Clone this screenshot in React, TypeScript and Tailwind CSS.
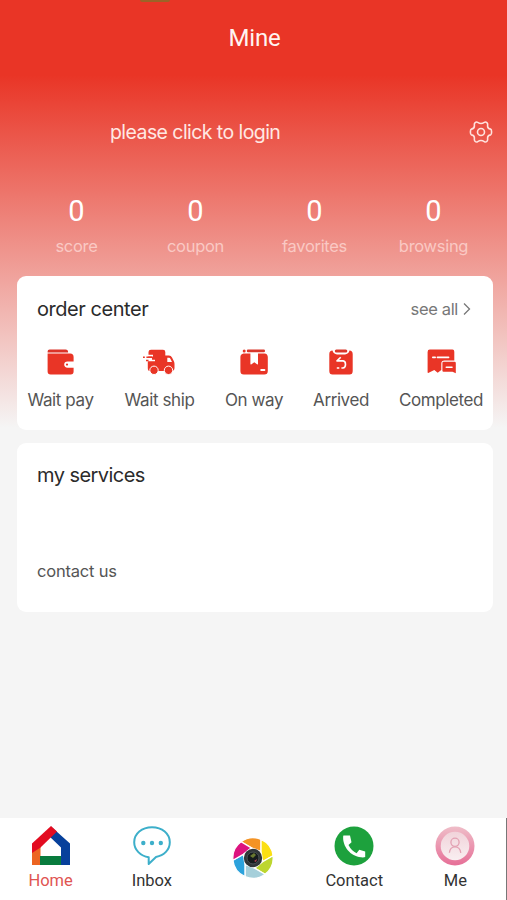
import type { ReactNode } from 'react';

const WalletIcon = () => (
  <svg width="28" height="26" viewBox="0 0 28 26" fill="#e93526">
    <path d="M.6 2.5Q.6.6 2.6.6H18.6Q21.1.6 21.1 3.4H.6Z" fill="#db3328" />
    <path d="M.6 4.4H23.2Q26.6 4.4 26.6 8V12.5H20.6Q17.2 12.7 17.2 15.6T20.6 18.8H26.6V22.5Q26.6 25.5 23.7 25.5H3.6Q.6 25.5.6 22.5Z" />
    <circle cx="20" cy="15.6" r="1.1" />
  </svg>
);

const TruckIcon = () => (
  <svg className="mr-[2px]" width="32" height="26" viewBox="0 0 32 26" fill="#e93526">
    <path d="M5.5 4.5V3Q5.5.8 8 .8H20Q22.3.8 22.3 3V6.5H26Q28 6.5 29 8.6L31 12.5Q31.5 13.5 31.5 15V19Q31.5 22 28.5 22H6.5Q4.8 22 4.8 19V12.2H12V10.7H9V9H5.2V7.4H10V5.8H5.5Z" />
    <path d="M24.3 8.8H26Q27 8.8 27.5 9.9L29 13H24.3Z" fill="white" />
    <path d="M0 8.2H1.8M3.4 8.2H9M3 11.5H5.5" stroke="#e93526" strokeWidth="1.5" />
    <circle cx="11" cy="21.3" r="4.2" stroke="white" strokeWidth="1" />
    <circle cx="25.5" cy="21.3" r="4.2" stroke="white" strokeWidth="1" />
  </svg>
);

const ParcelIcon = () => (
  <svg width="28" height="26" viewBox="0 0 28 26" fill="#e93526">
    <circle cx="4.2" cy="2" r="1.5" />
    <rect x="6.8" y=".6" width="18.2" height="2.7" rx="1.2" fill="#d9362b" />
    <path d="M3.5 4.4H10.4V14.8Q10.4 16 11.5 15.3L14.3 13.3L17 15.3Q18 16 18 14.8V4.4H24.5Q27.7 4.8 27.8 8V22Q27.8 25.5 24.3 25.5H3.8Q.4 25.5.4 22V8Q.4 5 3.5 4.4Z" />
    <rect x="20.3" y="20" width="5" height="2" rx=".8" fill="white" />
  </svg>
);

const ClipboardIcon = () => (
  <svg width="24" height="26" viewBox="0 0 24 26" fill="#e93526">
    <path d="M3.5 1.5Q4.5 5.3 8 5.4H16Q19.5 5.3 20.5 1.5Q23.6 1.8 23.7 5V22Q23.7 25.5 20.5 25.5H3.5Q.3 25.5.3 22V5Q.3 1.8 3.5 1.5Z" />
    <rect x="5.8" y=".5" width="12.5" height="3" rx="1.5" fill="#d9362b" />
    <path d="M11.7 8.2L8 11.9H14.2Q16.5 12.2 16.5 15.4T13.8 19H12.4M7.8 19H10.3" fill="none" stroke="white" strokeWidth="1.6" strokeLinejoin="round" />
  </svg>
);

const ReceiptIcon = () => (
  <svg width="29" height="26" viewBox="0 0 29 26" fill="#e93526">
    <path d="M2.8.6H25.5Q27.3.6 27.3 2.7V11.4H17.4Q14.3 11.5 14.3 14.5V21L10.7 23.7L7.3 21L1.2 23.9Q.6 24 .6 23V3Q.6.6 2.8.6Z" />
    <path d="M16.5 12.8H27.5Q28.8 12.8 28.8 14V24.2L25.5 22.7H16.5Q15.4 22.7 15.4 21.5V14Q15.4 12.8 16.5 12.8Z" />
    <path d="M5.8 8.4H8.2M10.4 8.4H21.6M19.3 18.3H25" stroke="white" strokeWidth="1.6" strokeLinecap="round" />
  </svg>
);

const GearIcon = () => (
  <svg width="24" height="24" viewBox="0 0 24 24" fill="none" stroke="#ffe3de" strokeWidth="1.6" strokeLinejoin="round">
    <path d="M6 2.8Q7.3 1.5 8.7 2.4Q12 4.5 15.3 2.4Q16.7 1.5 18 2.8Q19 4 18.6 5.5Q18.3 8.6 21.6 9.1Q22.6 9.5 22.6 12T21.6 14.9Q18.3 15.4 18.6 18.5Q19 20 18 21.2Q16.7 22.5 15.3 21.6Q12 19.5 8.7 21.6Q7.3 22.5 6 21.2Q5 20 5.4 18.5Q5.7 15.4 2.4 14.9Q1.4 14.5 1.4 12T2.4 9.1Q5.7 8.6 5.4 5.5Q5 4 6 2.8Z" />
    <circle cx="12" cy="12" r="3.5" />
  </svg>
);

const HouseIcon = () => (
  <svg width="38" height="39" viewBox="0 0 38 39">
    <path d="M0 24L8.5 18V39H0Z" fill="#ec6421" />
    <path d="M8 30H30V39H8Z" fill="#087b3d" />
    <path d="M19 .5L38 17.5V39H29V21.5L17 10Z" fill="#07409b" />
    <path d="M19 0L25 5.5L8.5 21.5L0 27V17.5Z" fill="#e30b20" />
  </svg>
);

const ChatIcon = () => (
  <svg width="38" height="40" viewBox="0 0 38 40" fill="none" stroke="#3dafca" strokeWidth="2">
    <path d="M19 1.2C29.2 1.2 36.8 7.7 36.8 16.2C36.8 23.8 31 29.6 23 31L15.7 38V31.2C7.4 30 1.2 23.8 1.2 16.2C1.2 7.7 8.8 1.2 19 1.2Z" strokeLinejoin="round" />
    <g fill="#3dafca" stroke="none">
      <circle cx="10.3" cy="17" r="2.2" />
      <circle cx="19" cy="17" r="2.2" />
      <circle cx="27.8" cy="17" r="2.2" />
    </g>
  </svg>
);

const blades = ['#f39325', '#fbdf13', '#bdd630', '#a5cfda', '#2ca2dc', '#dc137f'];

const ShutterIcon = () => (
  <svg width="42" height="42" viewBox="-21 -21 42 42">
    {blades.map((color, i) => (
      <path key={color} d="M-12 -16.2A20.2 20.2 0 0 1 8.1 -18.5L8 -6.5L-1.6 -10.2Z" fill={color} stroke="white" strokeWidth="1.3" transform={`rotate(${i * 60})`} />
    ))}
    <circle r="9.2" fill="#303638" />
    <circle r="6" fill="#151b1d" stroke="#4b5356" />
    <path d="M-3-2L1-5L3-3L0 0Z" fill="#687831" />
    <path d="M1 3L4 1L3 4Z" fill="#ad4050" />
  </svg>
);

const PhoneIcon = () => (
  <svg width="40" height="40" viewBox="0 0 40 40">
    <circle cx="20" cy="20" r="19.5" fill="#1da13d" />
    <path d="M9.5 9.5H16L17.5 16.3L14.5 19Q17.5 25 22.6 27.2L25.3 23.8L31.2 25.5V31Q30 31.6 27 31.3C16.5 30.3 8.3 20.5 9.2 10Z" fill="white" />
  </svg>
);

const AvatarIcon = () => (
  <svg width="40" height="40" viewBox="0 0 40 40" fill="none">
    <defs>
      <linearGradient id="ring" x2="0" y2="1">
        <stop stopColor="#efbdc8" />
        <stop offset="1" stopColor="#e66f97" />
      </linearGradient>
      <linearGradient id="disc" x2="0" y2="1">
        <stop stopColor="#f1d3da" />
        <stop offset="1" stopColor="#f9eff1" />
      </linearGradient>
    </defs>
    <circle cx="20" cy="20" r="19.5" fill="url(#ring)" />
    <circle cx="20" cy="20" r="14.3" fill="url(#disc)" />
    <g stroke="#e3a0b2" strokeWidth="1.3">
      <circle cx="20" cy="16.3" r="4.1" />
      <path d="M14.4 26.8Q15 20.8 20 20.8T25.8 26.8" />
    </g>
  </svg>
);

const stats = ['score', 'coupon', 'favorites', 'browsing'];

const Order = ({ icon, label, width }: { icon: ReactNode; label: string; width: string }) => (
  <div className={`flex flex-col items-center ${width}`}>
    <div className="h-[26px]">{icon}</div>
    <span className="mt-[13px] whitespace-nowrap text-[17px] leading-6 tracking-[-0.4px] text-[#555]">{label}</span>
  </div>
);

const Tab = ({ icon, label, color = 'text-[#333]' }: { icon: ReactNode; label: string; color?: string }) => (
  <div className="flex flex-1 flex-col items-center">
    <div className="h-10">{icon}</div>
    <span className={`mt-[3px] font-[Roboto,sans-serif] text-[16.5px] leading-6 ${color}`}>{label}</span>
  </div>
);

export default function App() {
  return (
    <div className="flex h-[900px] w-[507px] flex-col overflow-hidden bg-[#f5f5f5] bg-[linear-gradient(180deg,#e93526_0px,#e93526_75px,#f5f5f5_428px)] font-[Inter,sans-serif]">
      <header className="flex h-[76px] flex-col items-center">
        <div className="mr-[198px] h-[2px] w-[30px] rounded-b bg-[#9c6327]" />
        <h1 className="mt-[20px] pl-[2px] font-[Roboto,sans-serif] text-[24px] leading-8 tracking-[-0.2px] text-[#fff4f1]">Mine</h1>
      </header>

      <div className="flex h-[112px] items-center justify-between pr-[14px] pl-[110px]">
        <span className="pt-[2px] text-[19.5px] tracking-[-0.57px] text-[#ffe8e3]">please click to login</span>
        <GearIcon />
      </div>

      <div className="mr-[14px] ml-[17px] grid h-[88px] grid-cols-4">
        {stats.map((name) => (
          <div key={name} className="flex flex-col items-center">
            <span className="mt-[7px] font-[Roboto,sans-serif] text-[29px] leading-8 text-white">0</span>
            <span className="mt-[7px] text-[16.5px] leading-6 tracking-[-0.3px] text-[#fac9c4]">{name}</span>
          </div>
        ))}
      </div>

      <section className="mr-[14px] ml-[17px] h-[154px] rounded-[9px] bg-white">
        <div className="flex h-[73px] items-center justify-between pr-[22px] pb-[7px] pl-[20px]">
          <h2 className="text-[20px] tracking-[-0.45px] text-[#2b2b2b]">order center</h2>
          <div className="flex items-center gap-[5px] text-[#777]">
            <span className="text-[16.5px] tracking-[-0.35px]">see all</span>
            <svg width="8" height="14" viewBox="0 0 8 14" fill="none" stroke="currentColor" strokeWidth="1.3">
              <path d="M1 1.5L6.5 7L1 12.5" />
            </svg>
          </div>
        </div>
        <div className="flex justify-between px-[10px]">
          <Order icon={<WalletIcon />} label="Wait pay" width="w-[67px]" />
          <Order icon={<TruckIcon />} label="Wait ship" width="w-[70px]" />
          <Order icon={<ParcelIcon />} label="On way" width="w-[58px]" />
          <Order icon={<ClipboardIcon />} label="Arrived" width="w-[55px]" />
          <Order icon={<ReceiptIcon />} label="Completed" width="w-[84px]" />
        </div>
      </section>

      <section className="mt-[13px] mr-[14px] ml-[17px] h-[169px] rounded-[9px] bg-white px-[20px] pt-[18px]">
        <h2 className="text-[20px] leading-7 tracking-[-0.55px] text-[#2b2b2b]">my services</h2>
        <p className="mt-[70px] text-[16.5px] leading-6 tracking-[-0.2px] text-[#555]">contact us</p>
      </section>

      <nav className="mt-auto flex h-[82px] border-r border-[#777] bg-white pt-[8px]">
        <Tab icon={<HouseIcon />} label="Home" color="text-[#df5552]" />
        <Tab icon={<ChatIcon />} label="Inbox" />
        <div className="flex flex-1 justify-center pt-[11px]">
          <ShutterIcon />
        </div>
        <Tab icon={<PhoneIcon />} label="Contact" />
        <Tab icon={<AvatarIcon />} label="Me" />
      </nav>
    </div>
  );
}
